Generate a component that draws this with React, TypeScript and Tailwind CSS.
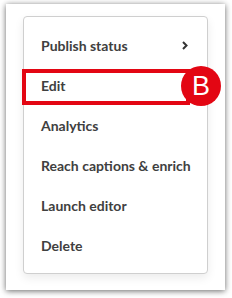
import React from "react";

const items = [
  "Publish status",
  "Edit",
  "Analytics",
  "Reach captions & enrich",
  "Launch editor",
  "Delete",
];

export default function App() {
  return (
    <div className="w-[232px] h-[298px] bg-white overflow-hidden relative">
      <div className="ml-[6px] mt-[4px] w-[219px] h-[286px] bg-white shadow-[0_1px_6px_rgba(0,0,0,0.6)] pt-[12px] pl-[17px]">
        <div
          className="w-[185px] h-[258px] rounded-[4px] border border-[#cfcfcf] bg-white shadow-[0_4px_10px_rgba(0,0,0,0.08)] pt-[8px] pl-[17px] pr-[18px] flex flex-col"
          style={{ fontFamily: "Lato, 'Noto Sans', sans-serif" }}
        >
          {items.map((t, i) => (
            <div
              key={t}
              className="h-[40px] flex items-center justify-between text-[14px] font-bold text-[#404040] whitespace-nowrap"
            >
              <span>{t}</span>
              {i === 0 && (
                <svg width="6" height="9" viewBox="0 0 6 9" className="mr-[1px] shrink-0">
                  <polyline
                    points="1,1 4.5,4.5 1,8"
                    fill="none"
                    stroke="#333"
                    strokeWidth="2"
                  />
                </svg>
              )}
            </div>
          ))}
        </div>
      </div>
      <div className="absolute left-[22px] top-[69px] w-[168px] h-[36px] border-[4px] border-[#e30613]" />
      <div
        className="absolute left-[181px] top-[66px] w-[40px] h-[40px] rounded-full bg-[#e30613] flex items-center justify-center text-white text-[27px] leading-none"
        style={{ fontFamily: "'Liberation Sans', Arial, sans-serif" }}
      >
        <span className="mt-[1px]">B</span>
      </div>
    </div>
  );
}
